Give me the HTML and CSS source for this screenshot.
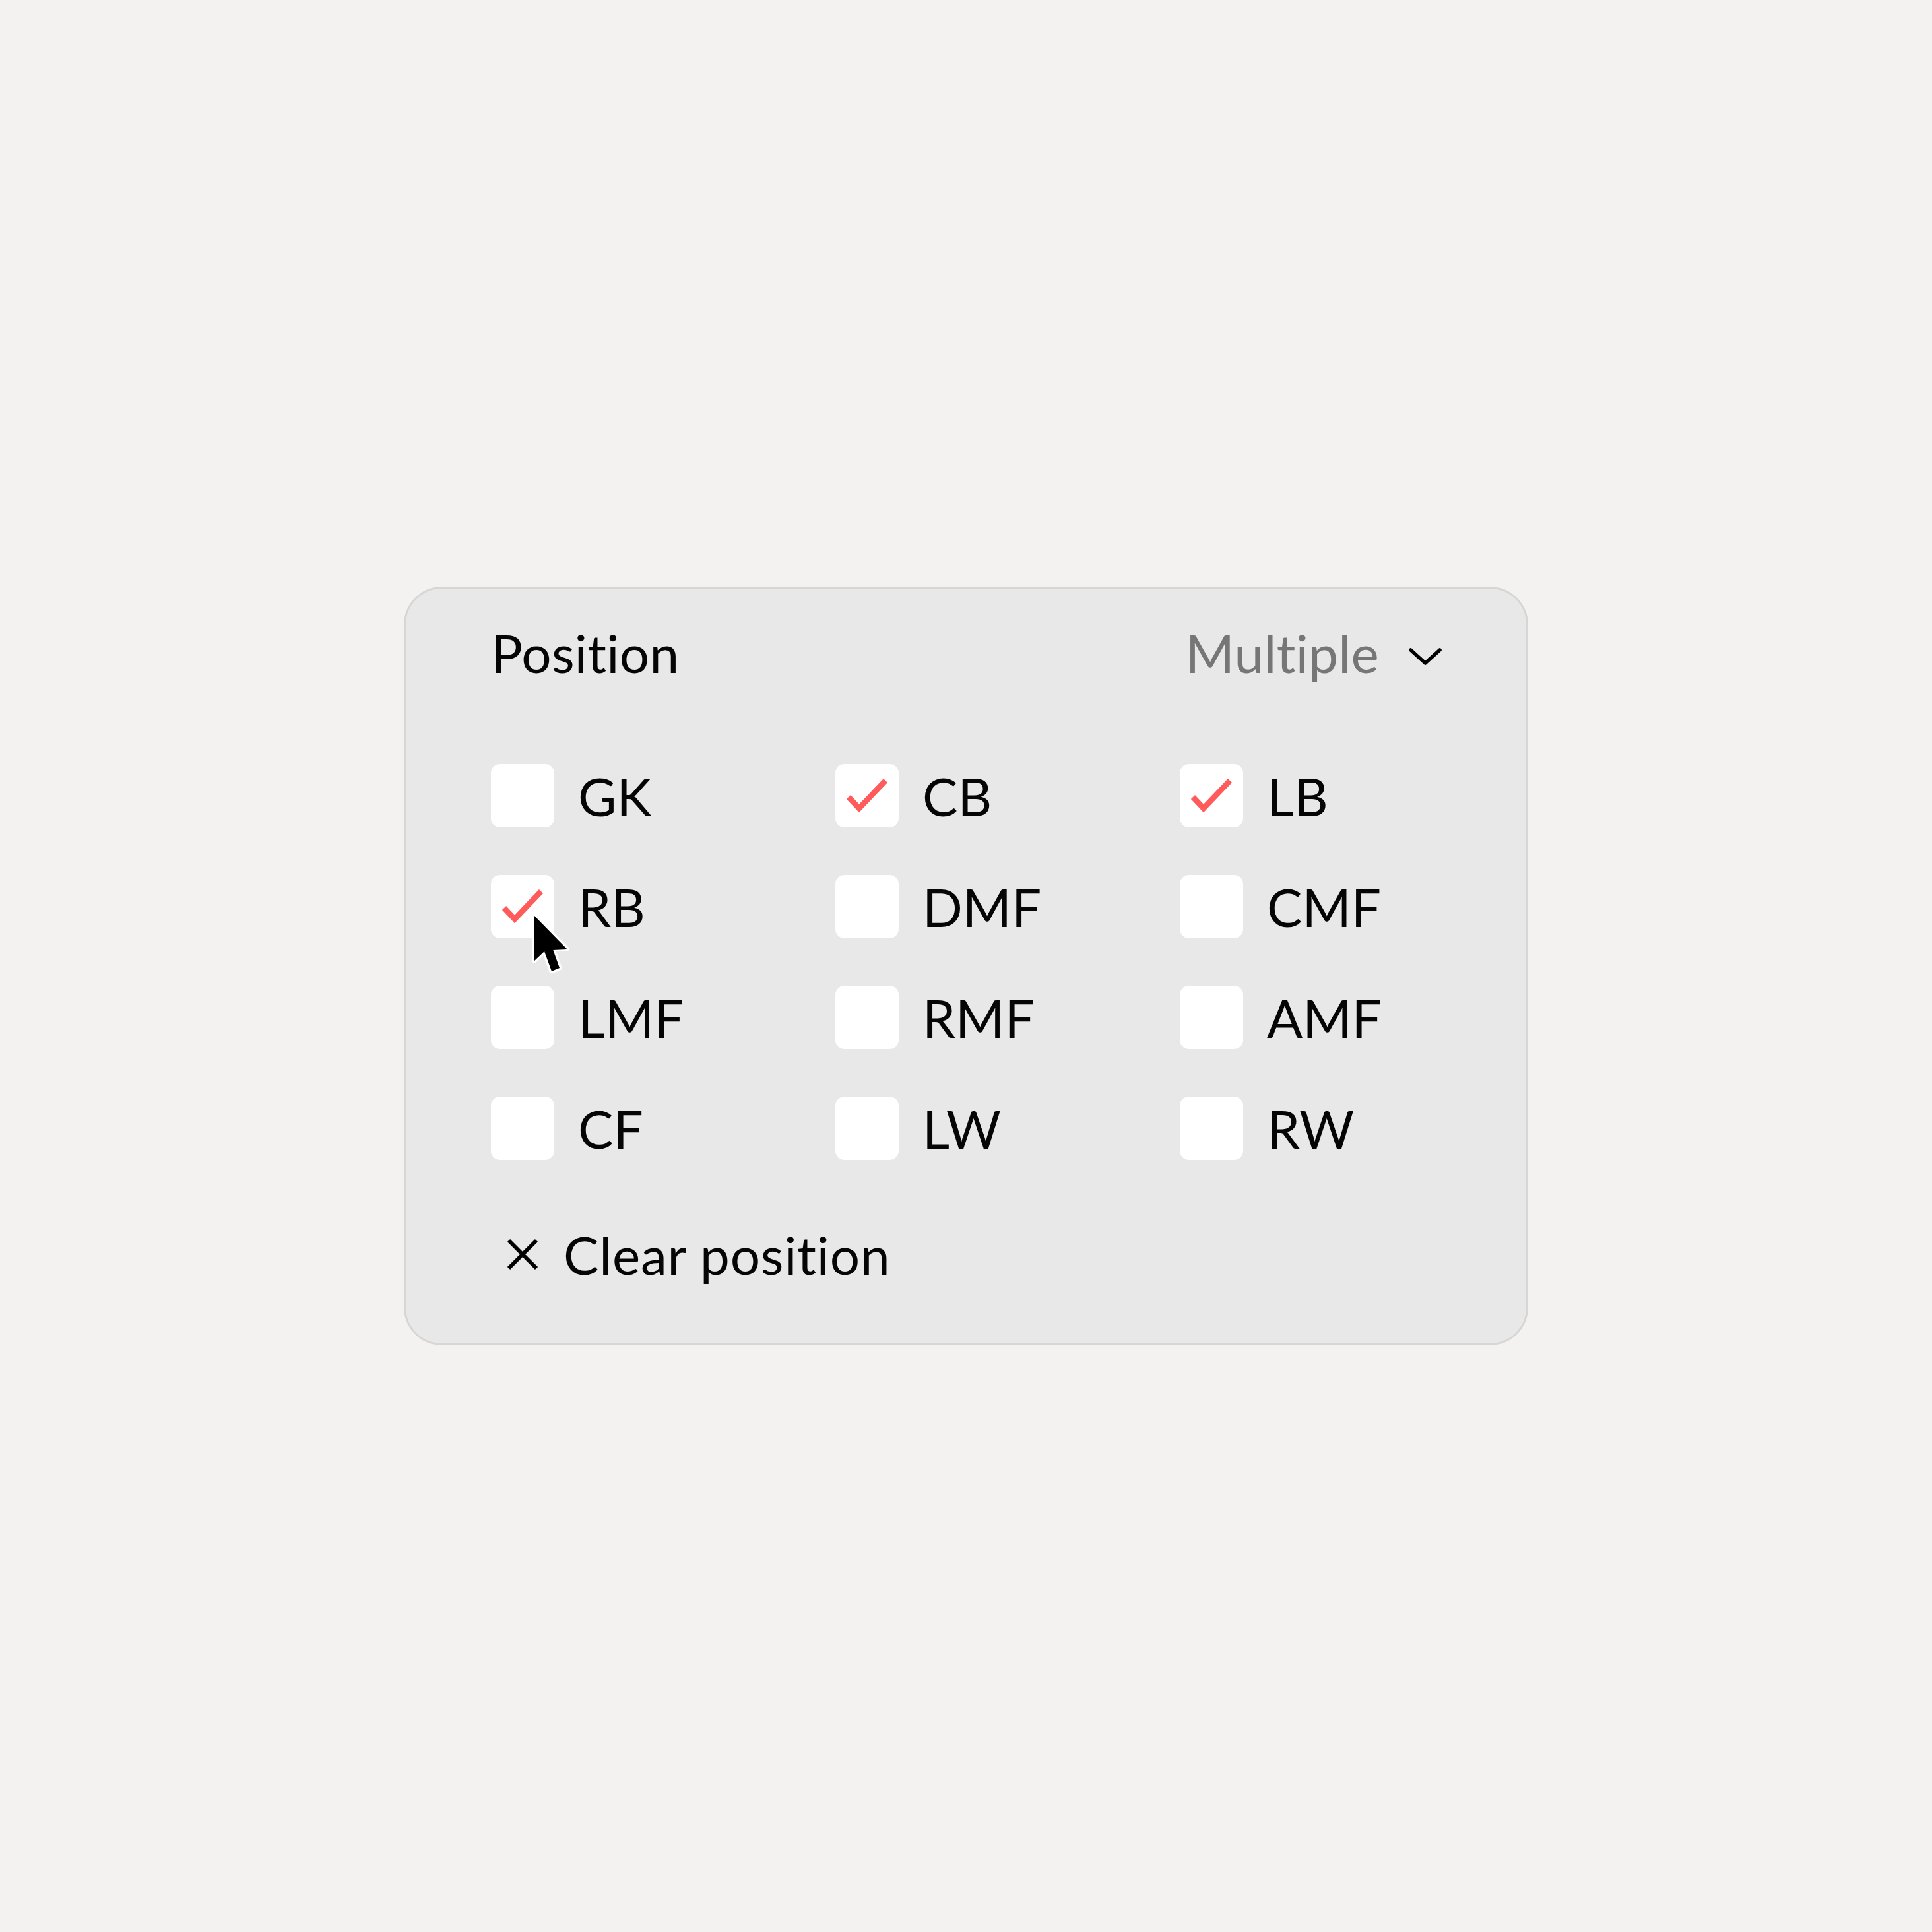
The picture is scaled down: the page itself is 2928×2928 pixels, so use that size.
FILE: index.html
```html
<!DOCTYPE html>
<html lang="en">
<head>
<meta charset="utf-8">
<title>Position filter</title>
<link rel="stylesheet" href="styles.css">
</head>
<body>
<div class="card">
  <div class="header">
    <span class="title">Position</span>
    <button class="select">
      <span class="select-label">Multiple</span>
      <svg class="chevron" viewBox="0 0 52 28" width="52" height="28"><polyline points="4,4 26,24 48,4" fill="none" stroke="#000" stroke-width="5.5" stroke-linecap="round" stroke-linejoin="round"/></svg>
    </button>
  </div>
  <div class="grid">
    <label class="item"><span class="box"></span><span class="label">GK</span></label>
    <label class="item"><span class="box checked"><svg class="check" viewBox="0 0 96 96"><polyline points="20,50 36,67 76,25" fill="none" stroke="#ff5b5b" stroke-width="8.5"/></svg></span><span class="label">CB</span></label>
    <label class="item"><span class="box checked"><svg class="check" viewBox="0 0 96 96"><polyline points="20,50 36,67 76,25" fill="none" stroke="#ff5b5b" stroke-width="8.5"/></svg></span><span class="label">LB</span></label>
    <label class="item"><span class="box checked"><svg class="check" viewBox="0 0 96 96"><polyline points="20,50 36,67 76,25" fill="none" stroke="#ff5b5b" stroke-width="8.5"/></svg><svg class="cursor" viewBox="-8 -8 72 112" width="72" height="112"><path d="M0 0 L0 68 L15 54 L26 84 L38 79 L28 51 L49 50 Z" fill="#000" stroke="#fff" stroke-width="7" stroke-linejoin="round" paint-order="stroke"/></svg></span><span class="label">RB</span></label>
    <label class="item"><span class="box"></span><span class="label">DMF</span></label>
    <label class="item"><span class="box"></span><span class="label">CMF</span></label>
    <label class="item"><span class="box"></span><span class="label">LMF</span></label>
    <label class="item"><span class="box"></span><span class="label">RMF</span></label>
    <label class="item"><span class="box"></span><span class="label">AMF</span></label>
    <label class="item"><span class="box"></span><span class="label">CF</span></label>
    <label class="item"><span class="box"></span><span class="label">LW</span></label>
    <label class="item"><span class="box"></span><span class="label">RW</span></label>
  </div>
  <button class="clear">
    <svg class="x" viewBox="0 0 48 48" width="48" height="48"><path d="M3 3 L45 45 M45 3 L3 45" stroke="#000" stroke-width="6" fill="none"/></svg>
    <span class="clear-label">Clear position</span>
  </button>
</div>
</body>
</html>
```

FILE: styles.css
```css
html, body {
  margin: 0;
  padding: 0;
}
body {
  background: #f3f2f0;
  height: 2928px;
  display: flex;
  align-items: center;
  justify-content: center;
  font-family: Lato, "Open Sans", sans-serif;
  font-variant-ligatures: none;
  font-feature-settings: "liga" 0, "clig" 0;
  color: #050505;
}
.card {
  box-sizing: border-box;
  width: 1704px;
  background: #e8e8e8;
  border: 3px solid #d8d6d2;
  border-radius: 58px;
  padding: 49px 129px 87px 129px;
  display: flex;
  flex-direction: column;
}
.header {
  height: 96px;
  display: flex;
  align-items: center;
  justify-content: space-between;
}
.title {
  font-size: 80px;
  line-height: 96px;
  letter-spacing: 0.3px;
}
.select {
  border: 0;
  background: none;
  padding: 0;
  margin: 0;
  display: flex;
  align-items: center;
  gap: 44px;
  font-family: inherit;
  font-variant-ligatures: none;
  font-feature-settings: "liga" 0, "clig" 0;
  cursor: pointer;
}
.select-label {
  font-size: 80px;
  line-height: 96px;
  letter-spacing: 0.3px;
  color: #767676;
}
.chevron {
  display: block;
  margin-right: -2px;
  margin-top: 12px;
}
.grid {
  margin-top: 121px;
  display: grid;
  grid-template-columns: repeat(3, 1fr);
  column-gap: 126px;
  row-gap: 72px;
}
.item {
  display: flex;
  align-items: center;
  gap: 36px;
  height: 96px;
}
.box {
  position: relative;
  width: 96px;
  height: 96px;
  flex: none;
  background: #fff;
  border-radius: 14px;
}
.check {
  display: block;
  width: 96px;
  height: 96px;
}
.cursor {
  position: absolute;
  left: 58px;
  top: 54px;
}
.label {
  font-size: 80px;
  line-height: 96px;
}
.clear {
  margin-top: 95px;
  height: 96px;
  border: 0;
  background: none;
  padding: 0;
  display: flex;
  align-items: center;
  gap: 38px;
  font-family: inherit;
  font-variant-ligatures: none;
  font-feature-settings: "liga" 0, "clig" 0;
  align-self: flex-start;
  margin-left: 24px;
  cursor: pointer;
  color: #050505;
}
.x {
  display: block;
}
.clear-label {
  font-size: 80px;
  line-height: 96px;
  letter-spacing: 0.8px;
}
```
